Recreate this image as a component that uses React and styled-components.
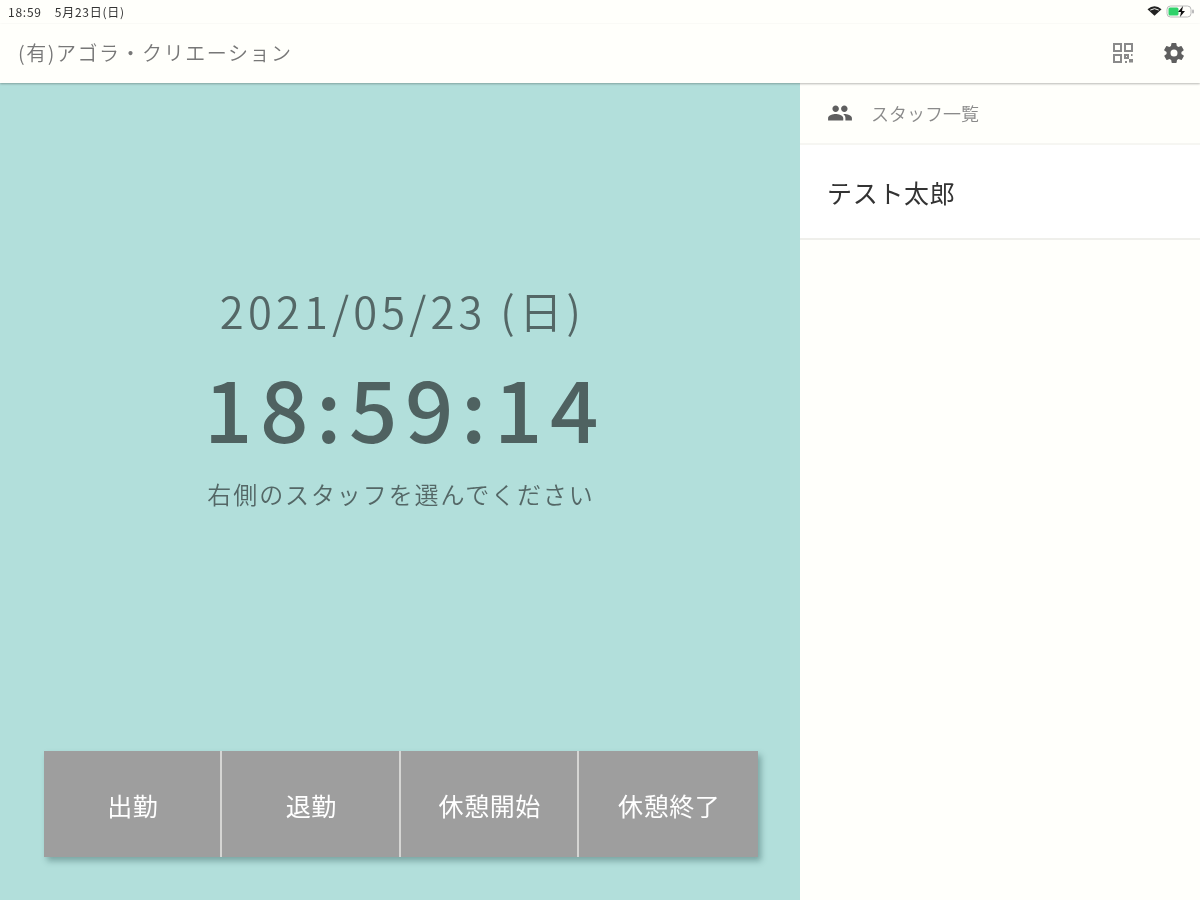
import React from "react";
import styled, { createGlobalStyle } from "styled-components";

const Global = createGlobalStyle`
  html, body { margin: 0; padding: 0; background: #fffffb; }
  body { font-family: "Noto Sans CJK JP", "Noto Sans", sans-serif; }
  * { box-sizing: border-box; }
`;
const Page = styled.div`
  width: 1200px; height: 900px; display: flex; flex-direction: column; overflow: hidden; background: #fffffb; filter: blur(0.7px);
`;
const StatusBar = styled.div`
  height: 24px; flex: none; display: flex; align-items: center; justify-content: space-between;
  padding: 0 4px 2px 8px; font-size: 12px; letter-spacing: .75px; color: #333;
`;
const StatusLeft = styled.div`display: flex; gap: 13px;`;
const StatusRight = styled.div`display: flex; align-items: center; gap: 4px;`;
const Header = styled.header`
  height: 59px; flex: none; display: flex; align-items: center; justify-content: space-between;
  padding: 0 14px 0 18px; position: relative; z-index: 2; box-shadow: 0 1px 2px rgba(0,0,0,.28);
  background: #fffffb;
`;
const Title = styled.div`font-size: 20px; font-weight: 350; color: #777; letter-spacing: 1.55px; padding-bottom: 2px;`;
const HeaderIcons = styled.div`display: flex; align-items: center; gap: 28px; color: #666; padding-bottom: 2px;`;
const Main = styled.div`flex: 1; display: flex; min-height: 0;`;
const Left = styled.section`
  width: 800px; flex: none; background: #b2dfdb; display: flex; flex-direction: column; align-items: center; color: #546766;
  padding-top: 197px;
`;
const DateText = styled.div`font-size: 43.5px; font-weight: 350; line-height: 62px; letter-spacing: 4.15px; padding-left: 5px;`;
const TimeText = styled.div`font-size: 85px; font-weight: 500; line-height: 124px; letter-spacing: 7.6px; color: #4f6261; margin-top: 2px; padding-left: 10px;`;
const Hint = styled.div`font-size: 24px; font-weight: 350; line-height: 36px; letter-spacing: 1.9px; margin-top: 8px; padding-left: 2px;`;
const Buttons = styled.div`
  margin-top: 239px; width: 714px; height: 106px; display: grid; grid-template-columns: repeat(4, 1fr);
  margin-left: 1px; background: #9e9e9e; box-shadow: 3px 4px 6px rgba(40,80,80,.4);
`;
const Btn = styled.div`
  display: flex; align-items: center; justify-content: center; color: #fff; font-size: 25px; font-weight: 400; letter-spacing: .6px;
  border-right: ${p => p.$last ? "none" : "2px solid #d5d5d3"};
  padding: 2px 0 0 2px;
`;
const Right = styled.aside`flex: 1; display: flex; flex-direction: column; background: #fffffb;`;
const ListHead = styled.div`
  height: 62px; display: flex; align-items: center; padding: 0 27px; gap: 18px; color: #8a8a8a; font-size: 18px; font-weight: 350;
  border-bottom: 2px solid #f6f6f2;
`;
const ListItem = styled.div`
  height: 95px; display: flex; align-items: center; padding: 0 27px 0; background: #fff; color: #333; font-size: 25px; font-weight: 400; letter-spacing: .7px;
  border-bottom: 2px solid #efefeb;
`;

const Wifi = () => (
  <svg width="15" height="12" viewBox="0 0 16 12" fill="#222"><path d="M8 11 L0.5 4 Q8 -2 15.5 4Z" /><path d="M3.5 5 Q8 2 12.500 5" stroke="#fffffb" fill="none" strokeWidth="1"/></svg>
);
const Battery = () => (
  <svg width="30" height="13" viewBox="0 0 30 13"><rect x="1" y="1" width="24" height="11" rx="3.500" fill="none" stroke="#bbb"/><rect x="2.500" y="2.500" width="10" height="8" rx="1.500" fill="#2fd26a"/><path d="M17 1 L12 7 H15 L14 12 L19 6 H16Z" fill="#111"/><rect x="26" y="4.500" width="2" height="4" rx="1" fill="#bbb"/></svg>
);
const Qr = () => (
  <svg width="22" height="22" viewBox="0 0 22 22" fill="none" stroke="#8a8a8a" strokeWidth="2">
    <rect x="2" y="2" width="7" height="7"/><rect x="13" y="2" width="7" height="7"/><rect x="2" y="13" width="7" height="7"/>
    <path d="M13 13h3v3h-3zM19 13h1.500M13 20h2M18 17v3.500M20 17v3.500" />
  </svg>
);
const Gear = () => (
  <svg width="24" height="24" viewBox="0 0 24 24" fill="#5f5f5f"><path fillRule="evenodd" d="M19.4 13a7.500 7.500 0 0 0 0-2l2.100-1.600a.5.5 0 0 0 .1-.6l-2-3.500a.5.5 0 0 0-.6-.2l-2.500 1a7.300 7.300 0 0 0-1.700-1l-.4-2.700a.5.5 0 0 0-.5-.4h-4a.5.5 0 0 0-.5.400l-.4 2.700a7.300 7.300 0 0 0-1.700 1l-2.500-1a.5.5 0 0 0-.6.2l-2 3.500a.5.5 0 0 0 .1.600L4.600 11a7.500 7.500 0 0 0 0 2l-2.100 1.600a.5.5 0 0 0-.1.6l2 3.500c.1.200.4.300.6.200l2.500-1c.5.400 1.100.7 1.700 1l.4 2.700c0 .2.200.4.500.4h4c.2 0 .4-.2.500-.4l.4-2.700c.6-.3 1.200-.6 1.700-1l2.500 1c.2.100.5 0 .6-.2l2-3.500a.5.5 0 0 0-.1-.6zM12 15.500a3.500 3.500 0 1 1 0-7 3.500 3.500 0 0 1 0 7z"/></svg>
);
const People = () => (
  <svg width="26" height="26" viewBox="0 0 24 24" fill="#5f5f5f"><path d="M16 11c1.660 0 2.990-1.340 2.990-3S17.660 5 16 5s-3 1.340-3 3 1.340 3 3 3zm-8 0c1.660 0 2.990-1.340 2.990-3S9.660 5 8 5 5 6.340 5 8s1.340 3 3 3zm0 2c-2.330 0-7 1.170-7 3.500V19h14v-2.500C15 14.170 10.330 13 8 13zm8 0c-.29 0-.62.020-.97.050 1.160.84 1.970 1.970 1.970 3.450V19h6v-2.500c0-2.330-4.670-3.500-7-3.500z"/></svg>
);

export default function App() {
  return (
    <Page>
      <Global />
      <StatusBar>
        <StatusLeft><span>18:59</span><span>5月23日(日)</span></StatusLeft>
        <StatusRight><Wifi /><Battery /></StatusRight>
      </StatusBar>
      <Header>
        <Title>(有)アゴラ・クリエーション</Title>
        <HeaderIcons><Qr /><Gear /></HeaderIcons>
      </Header>
      <Main>
        <Left>
          <DateText>2021/05/23 (日)</DateText>
          <TimeText>18:59:14</TimeText>
          <Hint>右側のスタッフを選んでください</Hint>
          <Buttons>
            <Btn>出勤</Btn>
            <Btn>退勤</Btn>
            <Btn>休憩開始</Btn>
            <Btn $last>休憩終了</Btn>
          </Buttons>
        </Left>
        <Right>
          <ListHead><People /><span>スタッフ一覧</span></ListHead>
          <ListItem>テスト太郎</ListItem>
        </Right>
      </Main>
    </Page>
  );
}
